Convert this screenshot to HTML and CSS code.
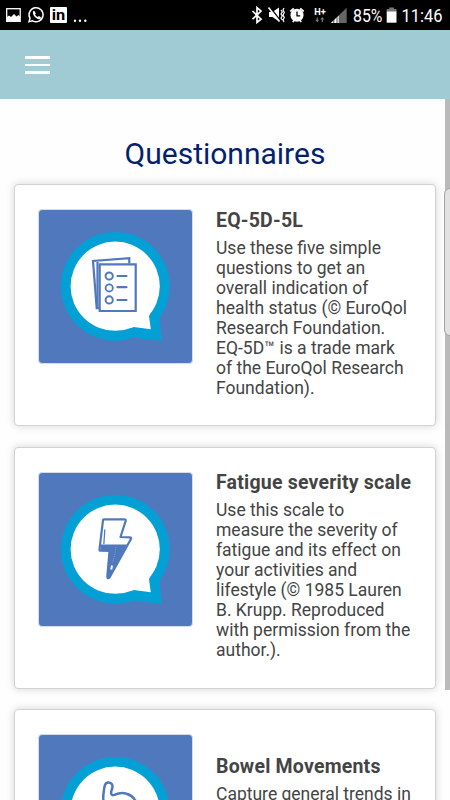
FILE: index.html
```html
<!DOCTYPE html>
<html lang="en">
<head>
<meta charset="utf-8">
<title>Questionnaires</title>
<link rel="stylesheet" href="styles.css">
</head>
<body>
<div class="screen">
  <header class="status">
    <svg width="100" height="30" viewBox="0 0 100 30">
      <rect x="6.700" y="8.700" width="13.500" height="12.600" fill="none" stroke="#fff" stroke-width="1.300"/>
      <path d="M7 21v-4l2-1.500 2 1.500 3-3 2.500 2.500 2-1.500 1.500 1.500V21z" fill="#fff"/>
      <path d="M29 21.700l1-3.500a7 7 0 1 1 2.600 2.600z" fill="none" stroke="#fff" stroke-width="1.500"/>
      <path d="M33 11.300l1.500-.4 1.300 2.500-.8 1.100c.7 1.300 1.500 2 2.700 2.600l1.100-1 2.200 1.200-.4 1.500c-3.500 1.800-8.500-3.500-7.600-7.500z" fill="#fff"/>
      <rect x="50" y="7" width="17" height="16" rx="1" fill="#fff"/>
      <text x="51.700" y="20.300" font-size="15" font-weight="700" textLength="13.500" lengthAdjust="spacingAndGlyphs">in</text>
      <g fill="#fff"><circle cx="75" cy="20.700" r="1.200"/><circle cx="80" cy="20.700" r="1.200"/><circle cx="85.300" cy="20.700" r="1.200"/></g>
    </svg>
    <svg width="204" height="30" viewBox="246 0 204 30">
      <path d="M252.500 11l8.500 8.200-4 3.300V7.500l4 3.500-8.500 8.200" fill="none" stroke="#fff" stroke-width="1.700"/>
      <path d="M269 12h3.500l6.500-4.500v14l-6.500-4.500H269z" fill="#fff"/>
      <path d="M269.500 6.500l11 14.500" stroke="#000" stroke-width="1.500"/>
      <path d="M268.500 7.500l11 14" stroke="#fff" stroke-width="1.500"/>
      <path d="M281 10l1.300 2-1.300 2 1.300 2-1.300 2 1.300 2M284 8l-1 2 1.300 2.500-1.300 2.500 1.300 2.500-1.300 2.500 1 2" stroke="#fff" stroke-width="1.200" fill="none"/>
      <circle cx="297" cy="15.200" r="6.500" fill="#fff"/>
      <path d="M290.300 11.500l3.500-3.200M303.700 11.500l-3.500-3.200M292.700 22l1.500-1.800M301.300 22l-1.500-1.800" stroke="#fff" stroke-width="1.700"/>
      <path d="M297 11.500v4.300h3.200" fill="none" stroke="#000" stroke-width="1.300"/>
      <text x="314.300" y="15" font-size="9.500" font-weight="700" fill="#fff" textLength="11.500" lengthAdjust="spacingAndGlyphs">H+</text>
      <path d="M317.200 17.500v3.500M322.300 22v-3.500" stroke="#777" stroke-width="1.200"/>
      <path d="M315.200 19.800h4l-2 2.500zM320.300 19.500h4l-2-2.500z" fill="#777"/>
      <path d="M331 23l15.700-15.300V23z" fill="#666"/>
      <path d="M331 23l7.700-7.500V23z" fill="#fff"/>
      <path d="M333.800 18v5M337 14v9" stroke="#000" stroke-width=".7"/>
      <text x="353" y="22.300" font-size="19" fill="#fff" textLength="29.500" lengthAdjust="spacingAndGlyphs">85%</text>
      <path d="M389.200 7.500h4.800v2.500h-4.800z" fill="#777"/>
      <path d="M386.700 9h9.800v3h-9.800z" fill="#777"/>
      <path d="M386.700 11.500h9.800v11.200h-9.800z" fill="#fff"/>
      <text x="401.500" y="22.300" font-size="19" fill="#fff" textLength="41" lengthAdjust="spacingAndGlyphs">11:46</text>
    </svg>
  </header>
  <nav class="nav"><div class="burger"><i></i><i></i><i></i></div></nav>
  <main>
    <h1>Questionnaires</h1>
    <article class="card">
      <svg class="tile" viewBox="39 210 153 153">
        <defs>
          <g id="bubble">
            <circle cx="115.300" cy="286.300" r="54.400" fill="#02a0d4"/>
            <path d="M160.500 314q-1 3-.7 7l2 20-28-3.500-6-20z" fill="#02a0d4"/>
            <circle cx="115.200" cy="286.200" r="44.600" fill="#fff"/>
            <path d="M150 314l-1 2 1.800 13.200-17-2.200-4.500 1-4-12z" fill="#fff"/>
          </g>
        </defs>
        <use href="#bubble"/>
        <g fill="none" stroke="#5079bd" stroke-width="2.200">
          <path d="M129.300 263.500v-5.300l-36.300 2.700 3.700 47.300h3"/>
          <path d="M97.500 308.500v-46.500"/>
          <path d="M99.700 264.300h36v46.700h-36z"/>
          <circle cx="109.200" cy="276" r="3.600" stroke-width="2"/><circle cx="109.200" cy="287.900" r="3.600" stroke-width="1.800"/><circle cx="109.200" cy="299.900" r="3.600" stroke-width="2"/>
          <path d="M117.500 276h9M117.500 287.200h9M117.500 300h9" stroke-linecap="round"/>
        </g>
      </svg>
      <div class="copy">
        <h2>EQ-5D-5L</h2>
        <p>Use these five simple<br>questions to get an<br>overall indication of<br>health status (© EuroQol<br>Research Foundation.<br>EQ-5D™ is a trade mark<br>of the EuroQol Research<br>Foundation).</p>
      </div>
    </article>
    <article class="card">
      <svg class="tile" viewBox="39 210 153 153">
        <use href="#bubble"/>
        <path d="M103 257.300q0-1 1-1h20.500q1.500 0 1.200 1.500l-5.200 16.200 9.500.3q1.700.3.800 2l-21.300 38.200q-2.300 2-2.200-1l2.200-25.500-9-.3q-1.200 0-1-1.500z" fill="#fff" stroke="#5079bd" stroke-width="2.200" stroke-linejoin="round"/>
        <path d="M100.500 281.500h26.500l-17.500 33q-2.300 2-2.200-1l2.200-25.500-9-.3z" fill="#5079bd"/>
        <path d="M104.800 267l-.9 13.500" stroke="#5079bd" stroke-width="1.300" stroke-linecap="round"/>
        <path d="M112 302.500l-.8 4" stroke="#fff" stroke-width="1.900"/>
        <path d="M116 284l-1.500 9-2 7" fill="none" stroke="#86a2d2" stroke-width="1" stroke-dasharray="1 1.300"/>
      </svg>
      <div class="copy">
        <h2>Fatigue severity scale</h2>
        <p>Use this scale to<br>measure the severity of<br>fatigue and its effect on<br>your activities and<br>lifestyle (© 1985 Lauren<br>B. Krupp. Reproduced<br>with permission from the<br>author.).</p>
      </div>
    </article>
    <article class="card">
      <svg class="tile" viewBox="39 210 153 153">
        <use href="#bubble"/>
        <path d="M104 281c-1-6-1-10-.3-14 .5-5.500 1.300-10 5-9.500 4.200.5 4.500 4 2.800 8-1 3.500 0 5.500 3 4.300 8-3.500 17-1.500 21 6 5 10 1 23-9 29-9 5-22 4-25-5" fill="none" stroke="#5079bd" stroke-width="2.500"/>
      </svg>
      <div class="copy low">
        <h2>Bowel Movements</h2>
        <p>Capture general trends in</p>
      </div>
    </article>
  </main>
  <div class="scrollbar"></div>
  <div class="edge-handle"></div>
</div>
</body>
</html>
```
FILE: styles.css
```css
* { box-sizing: border-box; }
body { margin: 0; font-family: Roboto, sans-serif; color: #444; background: #fff; }
.screen { position: relative; width: 450px; height: 800px; overflow: hidden; background: #fefefe; }
.status { height: 30px; background: #000; display: flex; justify-content: space-between; }
.nav { height: 68.5px; background: #a0cad4; padding: 26px 25px; }
.burger { width: 25px; display: grid; gap: 5px; }
.burger i { height: 2.6px; background: #fff; }
main { padding: 0 14px; }
h1 { margin: 0; height: 85.7px; padding-top: 37.2px; text-align: center; font-size: 30px; line-height: 36px; font-weight: 400; color: #041f70; }
.card { width: 422px; height: 242px; margin-bottom: 20.5px; padding: 24px 0 0 23px; display: flex; gap: 23px; background: #fff; border: 1px solid #d2d2d2; border-radius: 4px; box-shadow: 0 0 8px rgba(0,0,0,.16); }
.tile { flex: none; width: 155px; height: 155px; border: 1px solid #d7dcea; border-radius: 4px; background: #5079bd; }
.copy { white-space: nowrap; }
.copy.low { padding-top: 21px; }
h2 { margin: -.7px 0 0; font-size: 19.5px; line-height: 24px; font-weight: 700; letter-spacing: .21px; }
p { margin: 5.2px 0 0; font-size: 17.5px; line-height: 20px; }
.scrollbar { position: absolute; left: 445px; top: 98.5px; width: 5px; height: 591.5px; background: #bababa; }
.edge-handle { position: absolute; left: 444px; top: 187.5px; width: 14px; height: 148px; background: #e2e2e2; border: 1px solid #a5a5a5; border-radius: 6px; }
```
